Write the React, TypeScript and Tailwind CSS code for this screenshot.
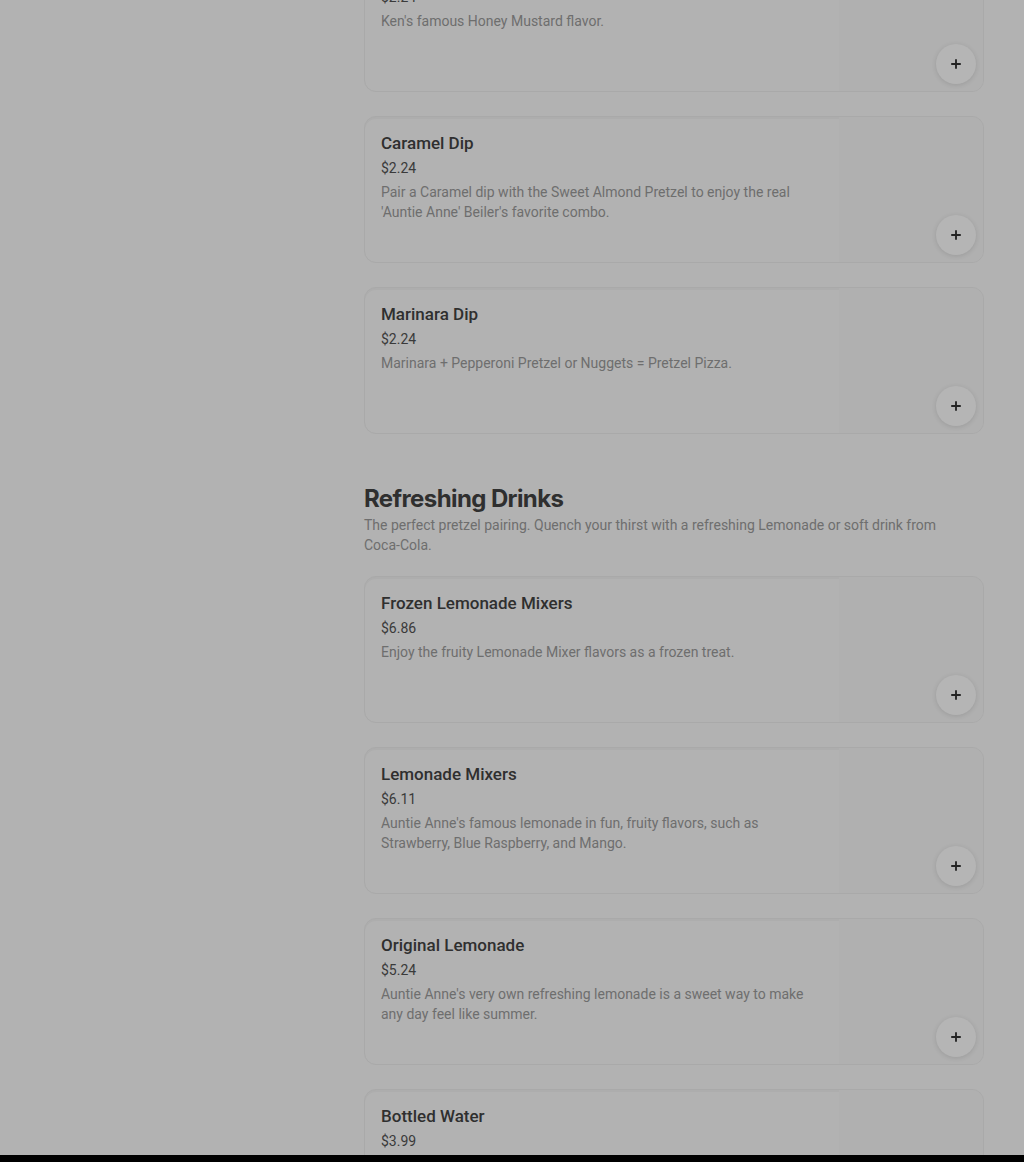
import { Plus } from "lucide-react";

type Item = { name: string; price: string; desc: string };

const dips: Item[] = [
    { name: "Honey Mustard Dip", price: "$2.24", desc: "Ken's famous Honey Mustard flavor." },
    {
        name: "Caramel Dip",
        price: "$2.24",
        desc: "Pair a Caramel dip with the Sweet Almond Pretzel to enjoy the real 'Auntie Anne' Beiler's favorite combo.",
    },
    { name: "Marinara Dip", price: "$2.24", desc: "Marinara + Pepperoni Pretzel or Nuggets = Pretzel Pizza." },
];

const drinks: Item[] = [
    { name: "Frozen Lemonade Mixers", price: "$6.86", desc: "Enjoy the fruity Lemonade Mixer flavors as a frozen treat." },
    {
        name: "Lemonade Mixers",
        price: "$6.11",
        desc: "Auntie Anne's famous lemonade in fun, fruity flavors, such as Strawberry, Blue Raspberry, and Mango.",
    },
    {
        name: "Original Lemonade",
        price: "$5.24",
        desc: "Auntie Anne's very own refreshing lemonade is a sweet way to make any day feel like summer.",
    },
    { name: "Bottled Water", price: "$3.99", desc: "" },
];

const MenuCard = ({ item }: { item: Item }) => {
    return (
        <div className="flex h-[147px] rounded-xl border border-[#a9a9a9] bg-[#b2b2b2] shadow-[inset_0_2px_0_#adadad] overflow-hidden">
            <div className="flex-1 pl-4 pt-[15px] pr-4">
                <h3 className="text-[17px] leading-[22px] font-medium text-[#2f2f2f]">{item.name}</h3>
                <p className="mt-1 text-sm leading-5 text-[#3a3a3a]">{item.price}</p>
                <p className="mt-1 max-w-[440px] text-sm leading-5 text-[#6e6e6e]">{item.desc}</p>
            </div>
            <div className="relative w-[144px] shrink-0 bg-[#b0b0b0]">
                <button className="absolute right-[7px] bottom-[7px] flex h-10 w-10 items-center justify-center rounded-full bg-[#b5b5b5] shadow-[0_1px_5px_rgba(0,0,0,0.12)]">
                    <Plus size={14} strokeWidth={3.2} className="text-[#242424]" />
                </button>
            </div>
        </div>
    );
};

const App = () => {
    return (
        <div className="relative h-[1162px] overflow-hidden bg-[#b2b2b2]" style={{ fontFamily: "Roboto, 'Liberation Sans', sans-serif" }}>
            <div className="flex">
                <aside className="w-[364px] shrink-0" />
                <main className="w-[620px] -mt-[55px]">
                    <div className="flex flex-col gap-6">
                        {dips.map((item, index) => (
                            <MenuCard key={index} item={item} />
                        ))}
                    </div>
                    <section className="mt-[49px]">
                        <h2 className="text-2xl leading-8 font-bold tracking-tight text-[#2f2f2f]" style={{ fontFamily: "Inter, Roboto, sans-serif" }}>
                            Refreshing Drinks
                        </h2>
                        <p className="max-w-[600px] text-sm leading-5 text-[#6e6e6e]">
                            The perfect pretzel pairing. Quench your thirst with a refreshing Lemonade or soft drink from Coca-Cola.
                        </p>
                        <div className="mt-[21px] flex flex-col gap-6">
                            {drinks.map((item, index) => (
                                <MenuCard key={index} item={item} />
                            ))}
                        </div>
                    </section>
                </main>
            </div>
            <div className="absolute bottom-0 left-0 right-0 h-[7px] bg-black" />
        </div>
    );
};

export default App;
